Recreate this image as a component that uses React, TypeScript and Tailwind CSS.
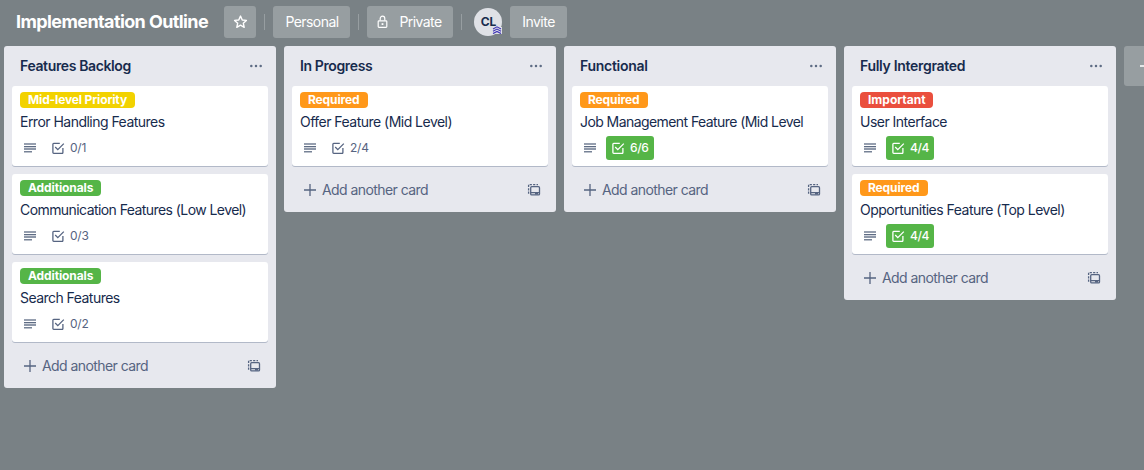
import type { ReactNode } from "react";

type Card = {
  label: string;
  labelClass: string;
  title: string;
  titleClass: string;
  count: string;
  done?: boolean;
};
type List = { name: string; nameClass: string; cards: Card[] };

const YELLOW = "w-[115px] bg-[#f2d200] tracking-[-0.14px]";
const GREEN = "w-[81px] bg-[#55b547] tracking-[-0.1px]";
const ORANGE = "w-[68px] bg-[#ff981a] tracking-[-0.13px]";
const RED = "w-[73px] bg-[#ea4f3d] tracking-[0px]";

const LISTS: List[] = [
  {
    name: "Features Backlog",
    nameClass: "tracking-[-0.37px]",
    cards: [
      { label: "Mid-level Priority", labelClass: YELLOW, title: "Error Handling Features", titleClass: "tracking-[-0.52px]", count: "0/1" },
      { label: "Additionals", labelClass: GREEN, title: "Communication Features (Low Level)", titleClass: "tracking-[-0.57px]", count: "0/3" },
      { label: "Additionals", labelClass: GREEN, title: "Search Features", titleClass: "tracking-[-0.54px]", count: "0/2" },
    ],
  },
  {
    name: "In Progress",
    nameClass: "tracking-[-0.38px]",
    cards: [
      { label: "Required", labelClass: ORANGE, title: "Offer Feature (Mid Level)", titleClass: "tracking-[-0.52px]", count: "2/4" },
    ],
  },
  {
    name: "Functional",
    nameClass: "tracking-[-0.28px]",
    cards: [
      { label: "Required", labelClass: ORANGE, title: "Job Management Feature (Mid Level", titleClass: "tracking-[-0.57px]", count: "6/6", done: true },
    ],
  },
  {
    name: "Fully Intergrated",
    nameClass: "tracking-[-0.3px]",
    cards: [
      { label: "Important", labelClass: RED, title: "User Interface", titleClass: "tracking-[-0.52px]", count: "4/4", done: true },
      { label: "Required", labelClass: ORANGE, title: "Opportunities Feature (Top Level)", titleClass: "tracking-[-0.51px]", count: "4/4", done: true },
    ],
  },
];

function StarIcon() {
  return (
    <svg width="16" height="16" viewBox="0 0 16 16" fill="none" stroke="currentColor" strokeWidth="1.4" strokeLinejoin="round">
      <path d="M8.500 2.100l1.750 3.850 4.150.450-3.100 2.800.900 4.150L8.500 11.200l-3.700 2.150.900-4.150-3.100-2.800 4.150-.450z" />
    </svg>
  );
}

function LockIcon() {
  return (
    <svg width="16" height="16" viewBox="0 0 16 16" fill="none" stroke="currentColor" strokeWidth="1.2">
      <rect x="3.200" y="6.800" width="8.600" height="6.600" rx="0.8" />
      <path d="M5.200 6.600V4.500a2.300 2.300 0 0 1 4.600 0v2.100" />
      <rect x="6.600" y="9.200" width="1.800" height="1.800" fill="currentColor" stroke="none" />
    </svg>
  );
}

function RankIcon() {
  return (
    <svg width="10" height="8" viewBox="0 0 10 8">
      <rect x="1" y="1" width="9" height="7" fill="#dfe1e6" />
      <path d="M1 3L5 .8 9 3M1 5.300l4-2.200 4 2.200M1 7.600l4-2.200 4 2.200" fill="none" stroke="#4338b8" strokeWidth="1.150" />
    </svg>
  );
}

function DescriptionIcon() {
  return (
    <svg width="16" height="16" viewBox="0 0 16 16" fill="#5e6c84">
      <rect x="2" y="3" width="12" height="2" opacity="0.650" />
      <rect x="2" y="6" width="12" height="1.300" />
      <rect x="2" y="8" width="12" height="2" opacity="0.700" />
      <rect x="2" y="11" width="8" height="1.500" opacity="0.850" />
    </svg>
  );
}

function ChecklistIcon() {
  return (
    <svg width="16" height="16" viewBox="0 0 16 16" fill="none" stroke="currentColor" strokeWidth="1.3">
      <path d="M9.800 3.400H3.700a.8.8 0 0 0-.8.8v8.400a.8.8 0 0 0 .8.8h8.400a.8.8 0 0 0 .8-.8V8" />
      <path d="M5.200 7l2.600 2.600 6-6" />
    </svg>
  );
}

function TemplateIcon() {
  return (
    <svg width="16" height="16" viewBox="0 0 16 16" fill="none" stroke="#566481" strokeWidth="1.3">
      <path d="M2.600 11.800V2.700H12" strokeDasharray="2.200 1.200" />
      <rect x="4.700" y="4.700" width="8.800" height="8.200" rx="1" />
      <path d="M4.700 10.700h8.800M9 11.800h3" />
    </svg>
  );
}

function PlusIcon() {
  return (
    <svg width="14" height="14" viewBox="0 0 14 14" fill="none" stroke="currentColor" strokeWidth="1.3">
      <path d="M7 1v12M1 7h12" />
    </svg>
  );
}

function DotsIcon() {
  return (
    <svg width="14" height="4" viewBox="0 0 14 4" fill="#5e6c84">
      <circle cx="2.300" cy="2" r="1.250" />
      <circle cx="7" cy="2" r="1.250" />
      <circle cx="11.700" cy="2" r="1.250" />
    </svg>
  );
}

function HeaderButton({ className, children }: { className: string; children: ReactNode }) {
  return (
    <button className={`flex h-8 shrink-0 items-center justify-center rounded-[3px] bg-[#979ea1] text-sm whitespace-nowrap text-white ${className}`}>
      {children}
    </button>
  );
}

function Divider() {
  return <span className="mx-2 h-4 w-px shrink-0 bg-[#979ea1]" />;
}

function CardView({ card }: { card: Card }) {
  return (
    <article className="flex h-20 flex-col items-start rounded-[3px] bg-white px-2 pt-1.5 shadow-[0_1px_0_#b2b9c8]">
      <span className={`h-4 rounded px-2 text-xs leading-4 font-bold whitespace-nowrap text-white ${card.labelClass}`}>{card.label}</span>
      <p className={`mt-1 h-5 text-sm leading-5 whitespace-nowrap text-[#172b4d] ${card.titleClass}`}>{card.title}</p>
      <div className="mt-1 flex h-6 items-center pl-0.5">
        <DescriptionIcon />
        <span
          className={`ml-2 flex h-6 w-12 items-center gap-1 rounded-[3px] pl-1 text-xs whitespace-nowrap ${
            card.done ? "bg-[#55b547] text-white" : "text-[#566481]"
          }`}
        >
          <ChecklistIcon />
          <span className={card.done ? "font-medium tracking-[-0.4px]" : "tracking-[-0.25px]"}>{card.count}</span>
        </span>
      </div>
    </article>
  );
}

function ListView({ list }: { list: List }) {
  return (
    <section className="w-[272px] shrink-0 rounded-[3px] bg-[#e7e8ee] px-2">
      <header className="flex h-10 items-center justify-between pr-[5px] pl-2">
        <h2 className={`text-sm font-semibold whitespace-nowrap text-[#172b4d] ${list.nameClass}`}>{list.name}</h2>
        <DotsIcon />
      </header>
      <div className="flex flex-col gap-2">
        {list.cards.map((card) => (
          <CardView key={card.title} card={card} />
        ))}
      </div>
      <footer className="flex h-[46px] items-center pt-[2px] pr-1.5 pl-[11px] text-[#566481]">
        <PlusIcon />
        <span className="ml-[5px] grow text-sm whitespace-nowrap tracking-[-0.57px]">Add another card</span>
        <TemplateIcon />
      </footer>
    </section>
  );
}

export default function App() {
  return (
    <div className="h-[470px] w-[1144px] overflow-hidden bg-[#798185] font-['Inter',sans-serif]">
      <nav className="flex h-[44px] items-center pl-4">
        <h1 className="w-52 shrink-0 text-lg font-bold whitespace-nowrap text-white tracking-[-0.6px]">Implementation Outline</h1>
        <HeaderButton className="w-8">
          <StarIcon />
        </HeaderButton>
        <Divider />
        <HeaderButton className="w-[77px] pl-px tracking-[-0.56px]">Personal</HeaderButton>
        <Divider />
        <HeaderButton className="w-[86px] gap-2 pr-[3px] tracking-[-0.55px]">
          <LockIcon />
          Private
        </HeaderButton>
        <Divider />
        <div className="relative ml-1 flex size-7 shrink-0 items-center justify-center rounded-full bg-[#dfe1e6] pl-px text-xs font-bold text-[#172b4d]">
          CL
          <span className="absolute right-0 bottom-0.5">
            <RankIcon />
          </span>
        </div>
        <HeaderButton className="ml-2 w-[57px] tracking-[-0.5px]">Invite</HeaderButton>
      </nav>
      <main className="flex items-start gap-2 pt-0.5 pl-1">
        {LISTS.map((list) => (
          <ListView key={list.name} list={list} />
        ))}
        <button className="flex h-10 w-[272px] shrink-0 items-center rounded-[3px] bg-[#979ea1] pl-[15px] text-white">
          <PlusIcon />
        </button>
      </main>
    </div>
  );
}
